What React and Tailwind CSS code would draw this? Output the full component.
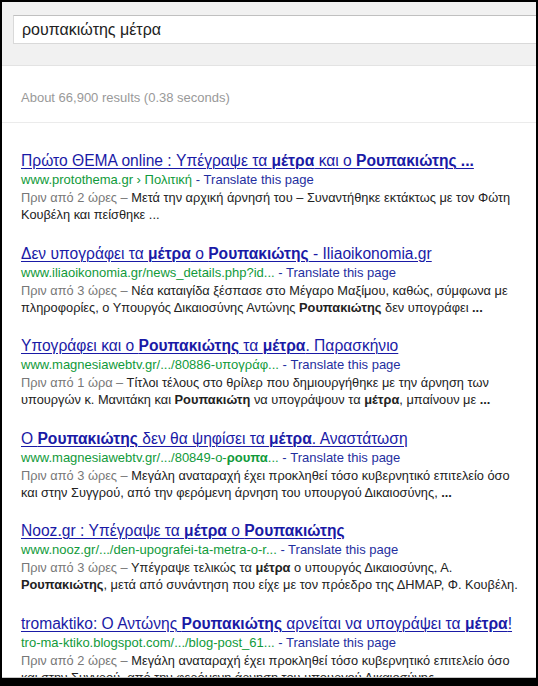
import React from 'react';

const results = [
  {
    title: ['Πρώτο ΘΕΜΑ online : Υπέγραψε τα ', ['μέτρα'], ' και ο ', ['Ρουπακιώτης ...']],
    url: ['www.protothema.gr › Πολιτική'],
    lines: [
      ['Μετά την αρχική άρνησή του – Συναντήθηκε εκτάκτως με τον Φώτη'],
      ['Κουβέλη και πείσθηκε ...'],
    ],
    date: 'Πριν από 2 ώρες',
  },
  {
    title: ['Δεν υπογράφει τα ', ['μέτρα'], ' ο ', ['Ρουπακιώτης'], ' - Iliaoikonomia.gr'],
    url: ['www.iliaoikonomia.gr/news_details.php?id...'],
    lines: [
      ['Νέα καταιγίδα ξέσπασε στο Μέγαρο Μαξίμου, καθώς, σύμφωνα με'],
      ['πληροφορίες, ο Υπουργός Δικαιοσύνης Αντώνης ', ['Ρουπακιώτης'], ' δεν υπογράφει ', ['...']],
    ],
    date: 'Πριν από 3 ώρες',
  },
  {
    title: ['Υπογράφει και ο ', ['Ρουπακιώτης'], ' τα ', ['μέτρα'], '. Παρασκήνιο'],
    url: ['www.magnesiawebtv.gr/.../80886-υπογράφ...'],
    lines: [
      ['Τίτλοι τέλους στο θρίλερ που δημιουργήθηκε με την άρνηση των'],
      ['υπουργών κ. Μανιτάκη και ', ['Ρουπακιώτη'], ' να υπογράψουν τα ', ['μέτρα'], ', μπαίνουν με ', ['...']],
    ],
    date: 'Πριν από 1 ώρα',
  },
  {
    title: ['Ο ', ['Ρουπακιώτης'], ' δεν θα ψηφίσει τα ', ['μέτρα'], '. Αναστάτωση'],
    url: ['www.magnesiawebtv.gr/.../80849-ο-', ['ρουπα'], '...'],
    lines: [
      ['Μεγάλη αναταραχή έχει προκληθεί τόσο κυβερνητικό επιτελείο όσο'],
      ['και στην Συγγρού, από την φερόμενη άρνηση του υπουργού Δικαιοσύνης, ', ['...']],
    ],
    date: 'Πριν από 3 ώρες',
  },
  {
    title: ['Nooz.gr : Υπέγραψε τα ', ['μέτρα'], ' ο ', ['Ρουπακιώτης']],
    url: ['www.nooz.gr/.../den-upografei-ta-metra-o-r...'],
    lines: [
      ['Υπέγραψε τελικώς τα ', ['μέτρα'], ' ο υπουργός Δικαιοσύνης, Α.'],
      [['Ρουπακιώτης'], ', μετά από συνάντηση που είχε με τον πρόεδρο της ΔΗΜΑΡ, Φ. Κουβέλη.'],
    ],
    date: 'Πριν από 3 ώρες',
  },
  {
    title: ['tromaktiko: Ο Αντώνης ', ['Ρουπακιώτης'], ' αρνείται να υπογράψει τα ', ['μέτρα'], '!'],
    url: ['tro-ma-ktiko.blogspot.com/.../blog-post_61...'],
    lines: [
      ['Μεγάλη αναταραχή έχει προκληθεί τόσο κυβερνητικό επιτελείο όσο'],
      ['και στην Συγγρού, από την φερόμενη άρνηση του υπουργού Δικαιοσύνης, ', ['...']],
    ],
    date: 'Πριν από 2 ώρες',
  },
];

// strings are plain text, one-item arrays are the bold hits
function Rich({ parts }) {
  return parts.map((p, i) =>
    Array.isArray(p) ? <b key={i} className="font-bold">{p[0]}</b> : <span key={i}>{p}</span>
  );
}

function Result({ r }) {
  return (
    <div className="mb-[20.5px]">
      <a href="#" className="block h-[20px] leading-[20px] text-[15.6px] text-[#1a1aa6] underline underline-offset-[2px] decoration-[1px]">
        <Rich parts={r.title} />
      </a>
      <div className="h-[18px] leading-[18px] text-[13px]">
        <span className="text-[#119a3a]"><Rich parts={r.url} /></span>
        <span className="text-[#1f2fa0]"> - Translate this page</span>
      </div>
      <div className="text-[12.8px] leading-[17px] text-[#222]">
        {r.lines.map((line, i) => (
          <div key={i} className="h-[17px]">
            {i === 0 && <span className="text-[#777]">{r.date} – </span>}
            <Rich parts={line} />
          </div>
        ))}
      </div>
    </div>
  );
}

export default function App() {
  return (
    <div className="w-[538px] h-[686px] bg-black pt-[2px] pl-[2px] pr-[2px] overflow-hidden whitespace-nowrap font-['Liberation_Sans',Arial,sans-serif]">
      <div className="h-[676px] bg-white border-b border-[#c8c8c8] overflow-hidden flex flex-col">
        {/* search header */}
        <div className="h-[64px] shrink-0 bg-[#f1f1f1] border-b border-[#e3e3e3] pt-[13px] pl-[11px]">
          <div className="h-[29px] bg-white border border-[#d9d9d9] border-t-[#c0c0c0] border-r-0 pl-[8px] text-[16px] leading-[27px] text-[#222]">
            ρουπακιώτης μέτρα
          </div>
        </div>

        {/* stats */}
        <div className="h-[57px] shrink-0 border-b border-[#ebebeb] pt-[24px] pl-[19px] text-[13px] leading-[16px] text-[#999]">
          About 66,900 results (0.38 seconds)
        </div>

        {/* results */}
        <div className="pt-[28px] pl-[19px]">
          {results.map((r, i) => (
            <Result key={i} r={r} />
          ))}
        </div>
      </div>
    </div>
  );
}
